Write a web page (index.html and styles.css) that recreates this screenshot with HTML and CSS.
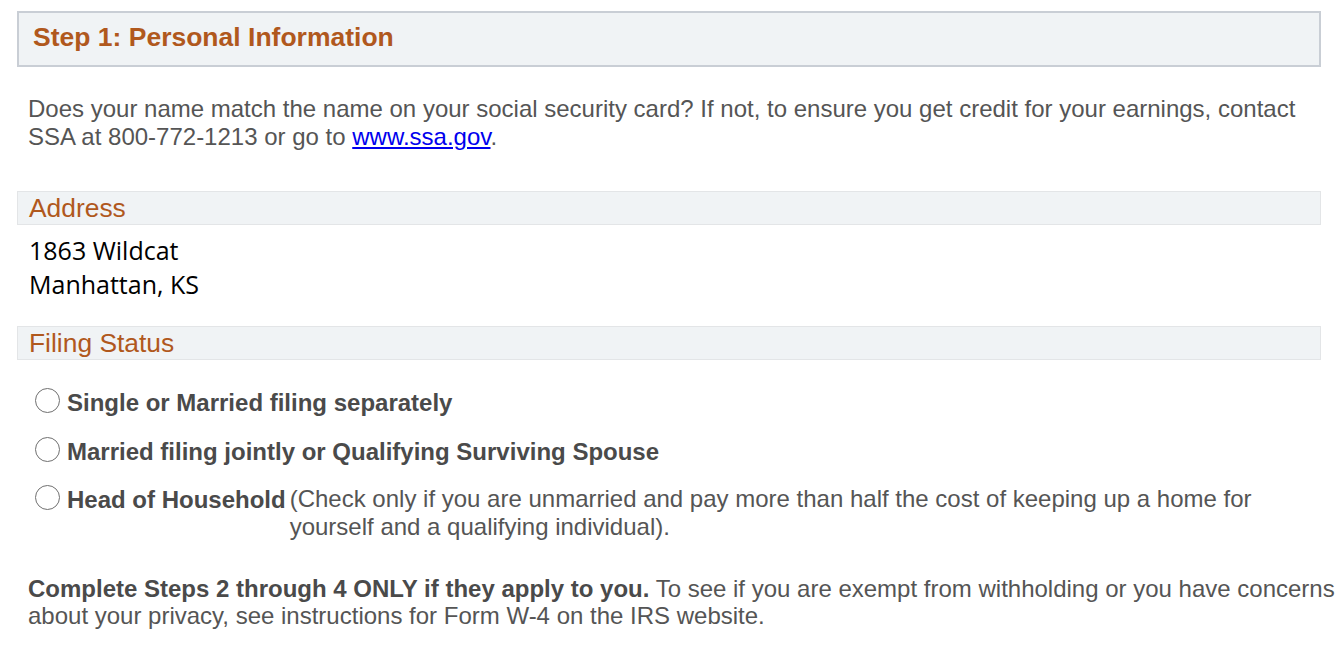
FILE: index.html
```html
<!DOCTYPE html>
<html>
<head>
<meta charset="utf-8">
<link rel="stylesheet" href="styles.css">
</head>
<body>
<div class="page">
  <div class="step-box"><h1 class="step-title">Step 1: Personal Information</h1></div>
  <p class="intro">Does your name match the name on your social security card? If not, to ensure you get credit for your earnings, contact SSA at 800-772-1213 or go to <a href="#">www.ssa.gov</a>.</p>

  <div class="section-bar"><h2 class="section-title">Address</h2></div>
  <div class="address">
    <div>1863 Wildcat</div>
    <div>Manhattan, KS</div>
  </div>

  <div class="section-bar"><h2 class="section-title">Filing Status</h2></div>
  <div class="radios">
    <div class="radio-row"><span class="radio"></span><span class="radio-label">Single or Married filing separately</span></div>
    <div class="radio-row"><span class="radio"></span><span class="radio-label">Married filing jointly or Qualifying Surviving Spouse</span></div>
    <div class="radio-row"><span class="radio"></span><span class="radio-label">Head of Household</span><span class="radio-note">(Check only if you are unmarried and pay more than half the cost of keeping up a home for yourself and a qualifying individual).</span></div>
  </div>

  <p class="outro"><strong>Complete Steps 2 through 4 ONLY if they apply to you.</strong> To see if you are exempt from withholding or you have concerns about your privacy, see instructions for Form W-4 on the IRS website.</p>
</div>
</body>
</html>
```

FILE: styles.css
```css
html, body {
  margin: 0;
  padding: 0;
  background: #ffffff;
}
body {
  font-family: "Liberation Sans", Arial, sans-serif;
  color: #555555;
}
.page {
  padding: 11px 23px 0 17px;
}
.step-box {
  background: #f0f3f5;
  border: 2px solid #c9ced5;
  height: 52px;
  box-sizing: content-box;
  display: flex;
  align-items: center;
  padding-left: 14px;
}
.step-title {
  margin: 0 0 4px 0;
  font-size: 26.5px;
  font-weight: bold;
  color: #b0581d;
}
.intro {
  margin: 28px -23px 0 11px;
  font-size: 24px;
  line-height: 28px;
  color: #555555;
}
.intro a {
  color: #0000ee;
  text-decoration: underline;
}
.section-bar {
  background: #f0f3f5;
  border: 1px solid #e3e5e7;
  height: 32px;
  display: flex;
  align-items: center;
  padding-left: 11px;
  margin-top: 40px;
}
.section-title {
  margin: 0;
  font-size: 26.4px;
  font-weight: normal;
  color: #b0581d;
}
.address {
  margin: 0 0 0 12px;
  padding-top: 8px;
  font-family: "Open Sans", "Noto Sans", sans-serif;
  font-size: 25px;
  line-height: 34px;
  color: #000000;
}
.address + .section-bar {
  margin-top: 25px;
}
.radios {
  padding: 29px 0 0 18px;
  display: flex;
  flex-direction: column;
  gap: 20.5px;
}
.radio-row {
  display: flex;
  align-items: flex-start;
}
.radio {
  flex: none;
  width: 25px;
  height: 25px;
  border: 1.5px solid #707070;
  border-radius: 50%;
  box-sizing: border-box;
  margin-top: -1px;
  margin-right: 7px;
  background: #fff;
}
.radio-label {
  flex: none;
  font-size: 24px;
  line-height: 28px;
  font-weight: bold;
  color: #4a4a4a;
}
.radio-note {
  font-size: 24px;
  line-height: 28px;
  color: #555555;
  margin-left: 4px;
  margin-top: -1px;
}
.outro {
  margin: 34px -23px 0 11px;
  font-size: 24px;
  line-height: 27px;
  color: #555555;
}
.outro strong {
  color: #4a4a4a;
}
```
